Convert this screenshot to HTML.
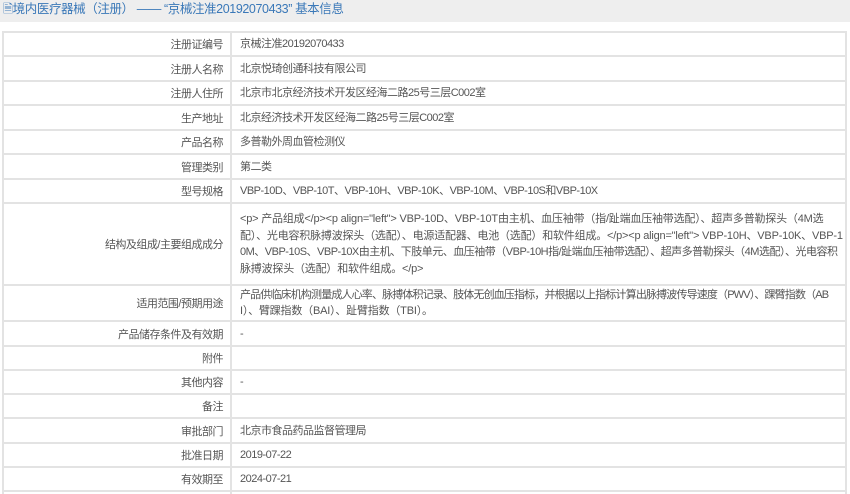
<!DOCTYPE html>
<html><head><meta charset="utf-8"><style>
body{margin:0;width:850px;height:494px;background:#fff;font-family:"Liberation Sans","Noto Sans CJK SC",sans-serif;font-size:11px;letter-spacing:-0.5px;color:#555;overflow:hidden;position:relative}
.hd{position:absolute;left:0;top:0;width:850px;height:22px;background:#eeeeee;color:#3a78b8;font-size:12.5px;letter-spacing:-0.4px;line-height:18px;padding-left:3px;box-sizing:border-box}
.r{position:absolute;left:2px;width:845px;border-top:2px solid #e3e3e3;box-sizing:border-box}
.l{position:absolute;left:0;top:0;bottom:0;width:230px;border-right:2px solid #e3e3e3;text-align:right;padding-right:7px;box-sizing:border-box;display:flex;align-items:center;justify-content:flex-end}
.v{position:absolute;left:238px;right:4px;top:0;bottom:0;display:flex;align-items:center;line-height:24px;overflow:hidden}
.lg{line-height:16.5px;letter-spacing:-0.2px}
.lg>div>div{white-space:nowrap}
.frame{position:absolute;left:2px;top:31px;width:845px;height:463px;border-left:2px solid #e3e3e3;border-right:2px solid #e3e3e3;box-sizing:border-box}
</style></head><body>
<div class="hd">&#128462;境内医疗器械（注册） —— “京械注准20192070433” 基本信息</div>
<div class="frame"></div>
<div class="r" style="top:31px;height:24px"><div class="l">注册证编号</div><div class="v">京械注准20192070433</div></div>
<div class="r" style="top:55px;height:25px"><div class="l">注册人名称</div><div class="v">北京悦琦创通科技有限公司</div></div>
<div class="r" style="top:80px;height:24px"><div class="l">注册人住所</div><div class="v">北京市北京经济技术开发区经海二路25号三层C002室</div></div>
<div class="r" style="top:104px;height:25px"><div class="l">生产地址</div><div class="v">北京经济技术开发区经海二路25号三层C002室</div></div>
<div class="r" style="top:129px;height:24px"><div class="l">产品名称</div><div class="v">多普勒外周血管检测仪</div></div>
<div class="r" style="top:153px;height:25px"><div class="l">管理类别</div><div class="v">第二类</div></div>
<div class="r" style="top:178px;height:24px"><div class="l">型号规格</div><div class="v">VBP-10D、VBP-10T、VBP-10H、VBP-10K、VBP-10M、VBP-10S和VBP-10X</div></div>
<div class="r" style="top:202px;height:82px"><div class="l">结构及组成/主要组成成分</div><div class="v lg"><div>
<div>&lt;p&gt; 产品组成&lt;/p&gt;&lt;p align="left"&gt; VBP-10D、VBP-10T由主机、血压袖带（指/趾端血压袖带选配）、超声多普勒探头（4M选</div>
<div>配）、光电容积脉搏波探头（选配）、电源适配器、电池（选配）和软件组成。&lt;/p&gt;&lt;p align="left"&gt; VBP-10H、VBP-10K、VBP-1</div>
<div style="letter-spacing:-0.5px">0M、VBP-10S、VBP-10X由主机、下肢单元、血压袖带（VBP-10H指/趾端血压袖带选配）、超声多普勒探头（4M选配）、光电容积</div>
<div>脉搏波探头（选配）和软件组成。&lt;/p&gt;</div>
</div></div></div>
<div class="r" style="top:284px;height:36px"><div class="l">适用范围/预期用途</div><div class="v lg"><div>
<div style="letter-spacing:-0.85px">产品供临床机构测量成人心率、脉搏体积记录、肢体无创血压指标，并根据以上指标计算出脉搏波传导速度（PWV）、踝臂指数（AB</div>
<div>I）、臂踝指数（BAI）、趾臂指数（TBI）。</div>
</div></div></div>
<div class="r" style="top:320px;height:25px"><div class="l">产品储存条件及有效期</div><div class="v">-</div></div>
<div class="r" style="top:345px;height:24px"><div class="l">附件</div><div class="v"></div></div>
<div class="r" style="top:369px;height:24px"><div class="l">其他内容</div><div class="v">-</div></div>
<div class="r" style="top:393px;height:24px"><div class="l">备注</div><div class="v"></div></div>
<div class="r" style="top:417px;height:25px"><div class="l">审批部门</div><div class="v">北京市食品药品监督管理局</div></div>
<div class="r" style="top:442px;height:24px"><div class="l">批准日期</div><div class="v">2019-07-22</div></div>
<div class="r" style="top:466px;height:24px"><div class="l">有效期至</div><div class="v">2024-07-21</div></div>
<div class="r" style="top:490px;height:4px"><div class="l"></div></div>
</body></html>
